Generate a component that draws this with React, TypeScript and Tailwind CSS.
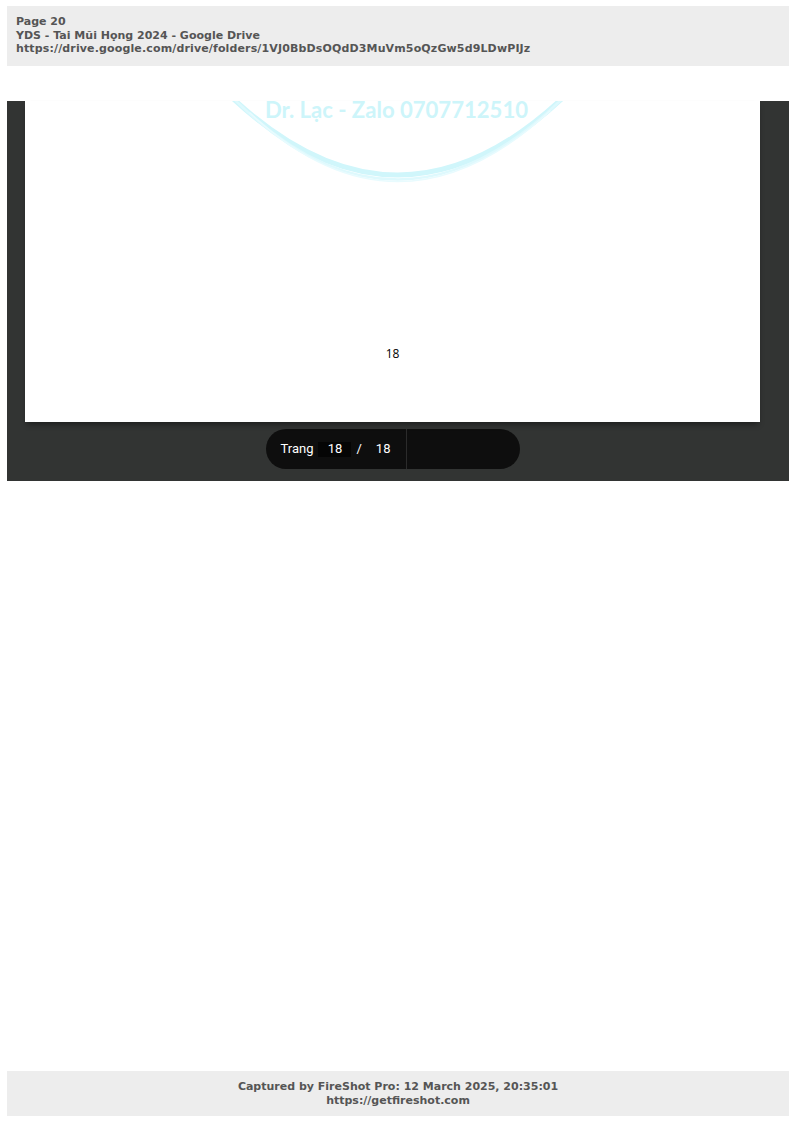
import React from "react";

export default function App() {
  return (
    <div className="w-[796px] h-[1123px] bg-white flex flex-col">
      <div
        className="mx-[7px] mt-[6px] h-[60px] bg-[#ededed] px-[9px] pt-[9px] text-[11px] leading-[13.5px] font-bold text-[#555555]"
        style={{ fontFamily: "Verdana, 'DejaVu Sans', sans-serif" }}
      >
        <div>Page 20</div>
        <div>YDS - Tai Mũi Họng 2024 - Google Drive</div>
        <div className="tracking-[0.14px]">https://drive.google.com/drive/folders/1VJ0BbDsOQdD3MuVm5oQzGw5d9LDwPIJz</div>
      </div>

      <div className="mx-[7px] mt-[35px] h-[380px] bg-[#323433] flex flex-col">
        <div className="ml-[18px] w-[735px] flex flex-col">
          <div className="relative h-[321px] bg-white overflow-hidden shadow-[0_4px_6px_-2px_rgba(0,0,0,0.45)]">
            <svg
              className="absolute left-[195px] top-[-40px]"
              width="360"
              height="130"
              viewBox="0 0 360 130"
              fill="none"
            >
              <path d="M0 25 Q 178 203 355 25" stroke="#d0f6fb" strokeWidth="5" strokeLinecap="round" />
              <path d="M8 32 Q 178 206 350 30" stroke="#def9fd" strokeWidth="2.5" strokeLinecap="round" />
              <path d="M30 52 Q 178 190 330 50" stroke="#e8fbfe" strokeWidth="1.5" strokeLinecap="round" />
              <text
                x="45"
                y="57"
                fill="#cdf5fa"
                fontSize="22"
                fontWeight="700"
                textLength="263"
                lengthAdjust="spacingAndGlyphs"
                fontFamily="'Lato', 'DejaVu Sans', sans-serif"
              >
                Dr. Lạc - Zalo 0707712510
              </text>
            </svg>
            <div
              className="absolute left-0 right-0 top-[246px] text-center text-[12px] leading-[14px] text-black"
              style={{ fontFamily: "'Open Sans', 'Liberation Sans', sans-serif" }}
            >
              18
            </div>
          </div>

          <div
            className="self-center mt-[7px] h-[40px] w-[254px] rounded-full bg-[#0e0e0e] flex items-center text-white text-[13px]"
            style={{ fontFamily: "Roboto, 'Liberation Sans', sans-serif" }}
          >
            <div className="flex items-center h-full w-[140px] pl-[15px]">
              <span>Trang</span>
              <span className="ml-[5px] w-[33px] h-[15px] bg-[#050505] flex items-center justify-center">18</span>
              <span className="ml-[5px]">/</span>
              <span className="ml-[14px]">18</span>
            </div>
            <div className="w-[1px] h-full bg-[#2b2b2b]" />
            <div className="flex-1" />
          </div>
        </div>
      </div>

      <div
        className="mt-auto mb-[7px] mx-[7px] h-[45px] bg-[#ededed] flex flex-col items-center justify-center text-[11px] leading-[13.5px] font-bold text-[#555555]"
        style={{ fontFamily: "Verdana, 'DejaVu Sans', sans-serif" }}
      >
        <div>Captured by FireShot Pro: 12 March 2025, 20:35:01</div>
        <div>https://getfireshot.com</div>
      </div>
    </div>
  );
}
